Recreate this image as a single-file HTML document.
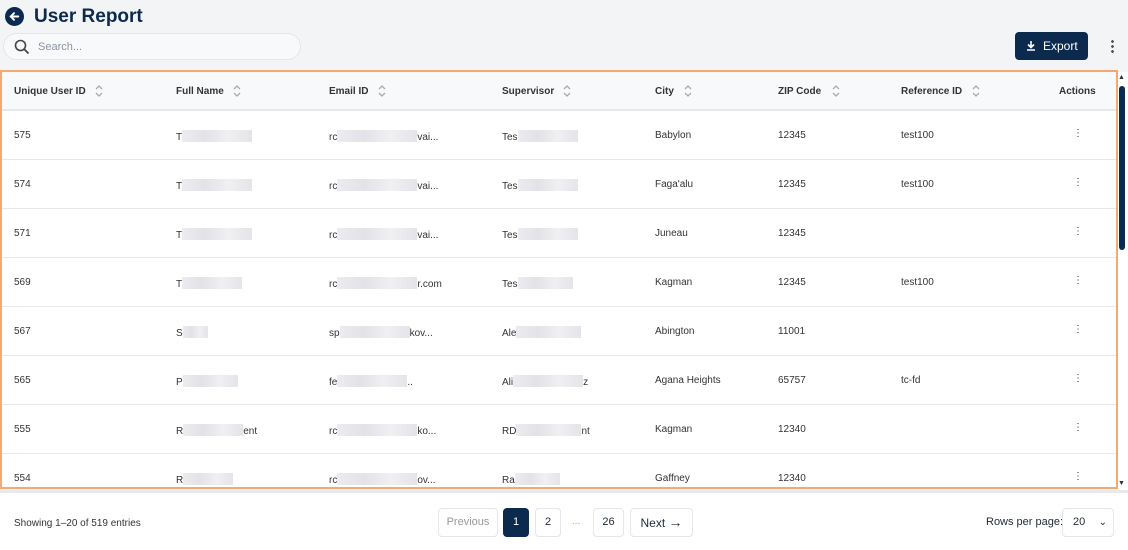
<!DOCTYPE html>
<html><head><meta charset="utf-8"><style>
*{box-sizing:border-box;margin:0;padding:0}
body{width:1128px;height:550px;overflow:hidden;background:#f3f4f6;font-family:"Liberation Sans",sans-serif;color:#1f2937;position:relative}
.abs{position:absolute}
h1{position:absolute;left:34px;top:6px;font-size:19px;font-weight:700;color:#0c2a4d}
.search{left:3px;top:33px;width:298px;height:27px;border:1px solid #e3e6ea;border-radius:14px;background:#f8f9fb}
.search span{position:absolute;left:34px;top:7px;font-size:11px;color:#8a94a3}
.export{left:1015px;top:32px;width:73px;height:28px;background:#0c2a4d;border-radius:4px;color:#fff;font-size:12px;line-height:28px;padding-left:28px}
.tbl{left:0;top:70px;width:1118px;height:419px;border:2px solid #f6a96f;background:#fff;overflow:hidden}
.hdr{position:absolute;left:0;top:0;width:100%;height:39px;background:#f7f9fb;border-bottom:2px solid #e6e8eb}
.hdr div{position:absolute;top:14px;font-size:10px;font-weight:700;color:#333}
.hdr svg{position:absolute;top:-3px}
.row{position:absolute;left:0;width:100%;height:49px;border-bottom:1px solid #e6e8eb}
.row div{position:absolute;top:19px;font-size:10px;color:#333;white-space:nowrap}
.b{display:inline-block;height:12px;vertical-align:-2px;background:linear-gradient(90deg,#ececf0,#e2e2e7,#f0f0f3,#e4e4e9)}
.dots{font-size:12px;color:#999;top:17px!important}
.foot{left:0;top:490px;width:1128px;height:60px;background:#fff;border-top:3px solid #e8e9ed}
.pg{position:absolute;top:15px;height:29px;border:1px solid #e3e6ea;border-radius:4px;font-size:11px;line-height:27px;text-align:center;background:#fff}
</style></head><body>
<svg class="abs" style="left:5px;top:7px" width="19" height="19" viewBox="0 0 20 20"><circle cx="10" cy="10" r="10" fill="#0c2a4d"/><path d="M14 10H6M9.5 6.5L6 10l3.5 3.5" stroke="#fff" stroke-width="2" fill="none" stroke-linecap="round"/></svg>
<h1>User Report</h1>
<div class="abs search"><svg class="abs" style="left:10px;top:5px" width="16" height="16" viewBox="0 0 16 16"><circle cx="6.5" cy="6.5" r="5" stroke="#444" stroke-width="1.6" fill="none"/><path d="M10.3 10.3L14.5 14.5" stroke="#444" stroke-width="1.8"/></svg><span>Search...</span></div>
<div class="abs export"><svg class="abs" style="left:11px;top:9px" width="10" height="10" viewBox="0 0 10 10"><path d="M5 0v6M2 3.5L5 6.5 8 3.5M1 9h8" stroke="#fff" stroke-width="1.6" fill="none"/></svg>Export</div>
<div class="abs" style="left:1111px;top:39px;width:3px;height:14px;background:radial-gradient(circle,#555 1.3px,transparent 1.5px) 0 0/3px 5px"></div>
<div class="abs tbl">
<div class="hdr">
<div style="left:12px">Unique User ID<svg style="left:80px" width="10" height="16" viewBox="0 0 10 16"><path d="M2 6l3-3 3 3M2 10l3 3 3-3" stroke="#aaa" stroke-width="1.3" fill="none"/></svg></div>
<div style="left:174px">Full Name<svg style="left:56px" width="10" height="16" viewBox="0 0 10 16"><path d="M2 6l3-3 3 3M2 10l3 3 3-3" stroke="#aaa" stroke-width="1.3" fill="none"/></svg></div>
<div style="left:327px">Email ID<svg style="left:48px" width="10" height="16" viewBox="0 0 10 16"><path d="M2 6l3-3 3 3M2 10l3 3 3-3" stroke="#aaa" stroke-width="1.3" fill="none"/></svg></div>
<div style="left:500px">Supervisor<svg style="left:60px" width="10" height="16" viewBox="0 0 10 16"><path d="M2 6l3-3 3 3M2 10l3 3 3-3" stroke="#aaa" stroke-width="1.3" fill="none"/></svg></div>
<div style="left:653px">City<svg style="left:28px" width="10" height="16" viewBox="0 0 10 16"><path d="M2 6l3-3 3 3M2 10l3 3 3-3" stroke="#aaa" stroke-width="1.3" fill="none"/></svg></div>
<div style="left:776px">ZIP Code<svg style="left:53px" width="10" height="16" viewBox="0 0 10 16"><path d="M2 6l3-3 3 3M2 10l3 3 3-3" stroke="#aaa" stroke-width="1.3" fill="none"/></svg></div>
<div style="left:899px">Reference ID<svg style="left:70px" width="10" height="16" viewBox="0 0 10 16"><path d="M2 6l3-3 3 3M2 10l3 3 3-3" stroke="#aaa" stroke-width="1.3" fill="none"/></svg></div>
<div style="left:1057px">Actions</div>
</div>
<div class="row" style="top:39px"><div style="left:12px">575</div><div style="left:174px">T<span class="b" style="width:70px"></span></div><div style="left:327px">rc<span class="b" style="width:80px"></span>vai...</div><div style="left:500px">Tes<span class="b" style="width:60px"></span></div><div style="left:653px">Babylon</div><div style="left:776px">12345</div><div style="left:899px">test100</div><div class="dots" style="left:1071px">⋮</div></div>
<div class="row" style="top:88px"><div style="left:12px">574</div><div style="left:174px">T<span class="b" style="width:70px"></span></div><div style="left:327px">rc<span class="b" style="width:80px"></span>vai...</div><div style="left:500px">Tes<span class="b" style="width:60px"></span></div><div style="left:653px">Faga'alu</div><div style="left:776px">12345</div><div style="left:899px">test100</div><div class="dots" style="left:1071px">⋮</div></div>
<div class="row" style="top:137px"><div style="left:12px">571</div><div style="left:174px">T<span class="b" style="width:70px"></span></div><div style="left:327px">rc<span class="b" style="width:80px"></span>vai...</div><div style="left:500px">Tes<span class="b" style="width:60px"></span></div><div style="left:653px">Juneau</div><div style="left:776px">12345</div><div class="dots" style="left:1071px">⋮</div></div>
<div class="row" style="top:186px"><div style="left:12px">569</div><div style="left:174px">T<span class="b" style="width:60px"></span></div><div style="left:327px">rc<span class="b" style="width:80px"></span>r.com</div><div style="left:500px">Tes<span class="b" style="width:55px"></span></div><div style="left:653px">Kagman</div><div style="left:776px">12345</div><div style="left:899px">test100</div><div class="dots" style="left:1071px">⋮</div></div>
<div class="row" style="top:235px"><div style="left:12px">567</div><div style="left:174px">S<span class="b" style="width:25px"></span></div><div style="left:327px">sp<span class="b" style="width:70px"></span>kov...</div><div style="left:500px">Ale<span class="b" style="width:65px"></span></div><div style="left:653px">Abington</div><div style="left:776px">11001</div><div class="dots" style="left:1071px">⋮</div></div>
<div class="row" style="top:284px"><div style="left:12px">565</div><div style="left:174px">P<span class="b" style="width:55px"></span></div><div style="left:327px">fe<span class="b" style="width:70px"></span>..</div><div style="left:500px">Ali<span class="b" style="width:70px"></span>z</div><div style="left:653px">Agana Heights</div><div style="left:776px">65757</div><div style="left:899px">tc-fd</div><div class="dots" style="left:1071px">⋮</div></div>
<div class="row" style="top:333px"><div style="left:12px">555</div><div style="left:174px">R<span class="b" style="width:60px"></span>ent</div><div style="left:327px">rc<span class="b" style="width:80px"></span>ko...</div><div style="left:500px">RD<span class="b" style="width:65px"></span>nt</div><div style="left:653px">Kagman</div><div style="left:776px">12340</div><div class="dots" style="left:1071px">⋮</div></div>
<div class="row" style="top:382px"><div style="left:12px">554</div><div style="left:174px">R<span class="b" style="width:50px"></span></div><div style="left:327px">rc<span class="b" style="width:80px"></span>ov...</div><div style="left:500px">Ra<span class="b" style="width:45px"></span></div><div style="left:653px">Gaffney</div><div style="left:776px">12340</div><div class="dots" style="left:1071px">⋮</div></div>
</div>
<div class="abs" style="left:1118px;top:72px;width:10px;height:418px;background:#fff"></div>
<div class="abs" style="left:1119px;top:86px;width:6px;height:164px;background:#0c2a4d;border-radius:3px"></div>
<div class="abs" style="left:1118px;top:74px;font-size:7px;color:#333">▲</div>
<div class="abs" style="left:1118px;top:480px;font-size:7px;color:#333">▼</div>
<div class="abs foot">
<div class="abs" style="left:14px;top:25px;font-size:10px;color:#333">Showing 1–20 of 519 entries</div>
<div class="pg" style="left:438px;width:60px;color:#999">Previous</div>
<div class="pg" style="left:503px;width:26px;background:#0c2a4d;color:#fff;border-color:#0c2a4d">1</div>
<div class="pg" style="left:535px;width:26px">2</div>
<div class="abs" style="left:572px;top:23px;font-size:10px;color:#aaa">...</div>
<div class="pg" style="left:593px;width:31px">26</div>
<div class="pg" style="left:630px;width:63px;font-size:12px">Next <b style="font-size:14px">→</b></div>
<div class="abs" style="left:986px;top:23px;font-size:11px">Rows per page:</div>
<div class="pg" style="left:1062px;width:52px;text-align:left;padding-left:10px">20 <span style="position:absolute;right:6px;font-size:10px">⌄</span></div>
</div>
</body></html>
